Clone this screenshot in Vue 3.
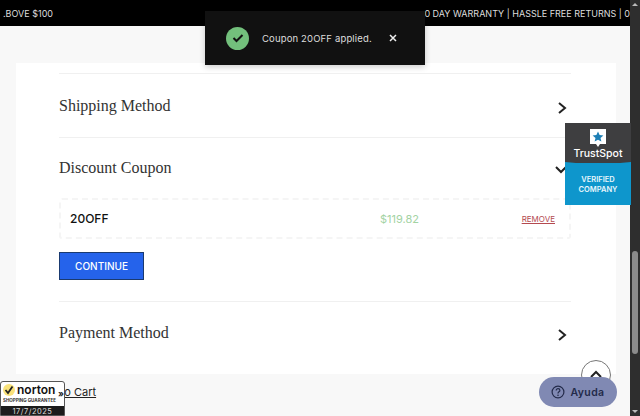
<script setup>
const sections = {
  shipping: 'Shipping Method',
  discount: 'Discount Coupon',
  payment: 'Payment Method'
};
</script>

<template>
  <div class="page">
    <div class="main">
      <div class="promo">
        <span>.BOVE $100</span>
        <span>0 DAY WARRANTY | HASSLE FREE RETURNS | 0</span>
      </div>

      <div class="card">
        <div class="row row-first">
          <h3>{{ sections.shipping }}</h3>
          <svg class="chev" width="12" height="14" viewBox="0 0 12 14"><path d="M3 2l6 5-6 5" /></svg>
        </div>

        <div class="row row-open">
          <h3>{{ sections.discount }}</h3>
          <svg class="chev" width="14" height="10" viewBox="0 0 14 10"><path d="M2 2l5 5 5-5" /></svg>
        </div>
        <div class="coupon">
          <span class="code">20OFF</span>
          <span class="amount">$119.82</span>
          <a class="remove">REMOVE</a>
        </div>
        <button class="continue">CONTINUE</button>

        <div class="row row-last">
          <h3>{{ sections.payment }}</h3>
          <svg class="chev" width="12" height="14" viewBox="0 0 12 14"><path d="M3 2l6 5-6 5" /></svg>
        </div>
      </div>

      <div class="back"><a>Back to Cart</a></div>
    </div>

    <div class="scrollbar">
      <svg class="arrow" width="10" height="9" viewBox="0 0 10 9"><path d="M2 6h6L5 3z" /></svg>
      <div class="track"><div class="thumb"></div></div>
      <svg class="arrow" width="10" height="9" viewBox="0 0 10 9"><path d="M2 3h6L5 6z" /></svg>
    </div>

    <div class="toast">
      <span class="tick">
        <svg width="12" height="10" viewBox="0 0 12 10"><path d="M1.5 5l3 3 6-6" /></svg>
      </span>
      <span class="toast-text">Coupon 20OFF applied.</span>
      <svg class="close" width="8" height="8" viewBox="0 0 8 8"><path d="M1 1l6 6M7 1l-6 6" /></svg>
    </div>

    <div class="trust">
      <div class="trust-top">
        <svg width="16" height="19" viewBox="0 0 16 19">
          <path d="M0 0h16v15h-6l-2 3-2-3H0z" fill="#fff" />
          <path d="M8 2.500l1.600 3.500 3.800.4-2.900 2.500.9 3.700L8 10.700l-3.400 1.900.9-3.700-2.900-2.500 3.800-.4z" fill="#1d7fb5" />
        </svg>
        <span class="trust-name">TrustSpot</span>
      </div>
      <div class="trust-bottom">
        <svg class="wave" width="66" height="4" viewBox="0 0 66 4"><path d="M0 1Q33 5 66 1V4H0z" /></svg>
        VERIFIED<br />COMPANY
      </div>
    </div>

    <div class="top-btn">
      <svg width="14" height="9" viewBox="0 0 14 9"><path d="M2 7l5-5 5 5" /></svg>
    </div>

    <div class="help">
      <svg width="14" height="14" viewBox="0 0 14 14">
        <circle cx="7" cy="7" r="5.900" />
        <path d="M5.200 5.400c0-2.300 3.700-2.200 3.700 0 0 1.500-1.900 1.400-1.900 3" />
        <circle class="dot" cx="7" cy="10.200" r=".8" />
      </svg>
      <span>Ayuda</span>
    </div>

    <div class="norton">
      <div class="norton-top">
        <div class="norton-logo">
          <span class="norton-check">
            <svg width="10" height="10" viewBox="0 0 10 10"><path d="M1.500 5l2.500 3 4.500-6.500" /></svg>
          </span>
          <span class="norton-name">norton</span>
        </div>
        <div class="norton-sub">SHOPPING GUARANTEE</div>
      </div>
      <div class="norton-date">17/7/2025</div>
      <span class="norton-more">»</span>
    </div>
  </div>
</template>

<style>
html, body { margin: 0; overflow: hidden; }
</style>

<style scoped>
.page {
  position: relative;
  display: flex;
  width: 640px;
  height: 416px;
  overflow: hidden;
  background: #f8f8f8;
  font-family: "Inter", "Liberation Sans", sans-serif;
}

.main { flex: 1; min-width: 0; }

.promo {
  display: flex;
  justify-content: space-between;
  align-items: center;
  height: 26px;
  padding: 0 0 0 3px;
  background: #000;
  color: #ddd;
  font-size: 9px;
  white-space: nowrap;
}

.card {
  margin: 37px 14px 0 16px;
  height: 311px;
  box-sizing: border-box;
  padding: 10px 45px 0 43px;
  background: #fff;
}

.row {
  display: flex;
  justify-content: space-between;
  align-items: center;
  border-top: 1px solid #f0f0f0;
  padding-right: 3px;
}
.row-first { height: 63px; }
.row-open { height: 60px; }
.row-last { height: 66px; margin-top: 21px; }
.row-first .chev, .row-open .chev { margin-top: 4px; }
.row-last h3 { margin-bottom: 4px; }

.row h3 {
  font-family: "Liberation Serif", serif;
  font-size: 16px;
  font-weight: 400;
  color: #333;
  margin-top: 0;
}
.row-first h3, .row-open h3 { margin-bottom: 0; }

.chev path, .top-btn path {
  fill: none;
  stroke: #222;
  stroke-width: 2;
}

.coupon {
  display: grid;
  grid-template-columns: 1fr 100px 75px;
  align-items: center;
  height: 41px;
  box-sizing: border-box;
  padding: 0 14px 0 9px;
  border: 2px dashed #f5f5f5;
  border-radius: 3px;
}
.code { font-size: 12px; font-weight: 500; color: #111; }
.amount { font-size: 11px; color: #a3d3a3; }
.remove {
  justify-self: end;
  font-size: 8px;
  color: #b44a50;
  text-decoration: underline;
}

.continue {
  display: block;
  width: 85px;
  height: 28px;
  margin-top: 13px;
  padding: 0;
  background: #2563eb;
  border: 1px solid #1a3a70;
  color: #fff;
  font-family: inherit;
  font-size: 10px;
  font-weight: 500;
}

.back {
  margin-top: 11px;
  padding-left: 32px;
  font-size: 11px;
  color: #222;
}
.back a { text-decoration: underline; }

.scrollbar {
  display: flex;
  flex-direction: column;
  flex-shrink: 0;
  width: 10px;
  background: #2e2e2e;
}
.arrow { flex-shrink: 0; fill: #bbb; }
.track { flex: 1; padding-top: 242px; }
.thumb {
  width: 6px;
  height: 103px;
  margin: 0 auto;
  border-radius: 3px;
  background: #8b8b8b;
}

.toast {
  position: absolute;
  left: 205px;
  top: 11px;
  display: flex;
  align-items: center;
  width: 220px;
  height: 54px;
  box-sizing: border-box;
  padding-left: 21px;
  background: #111;
  box-shadow: 0 2px 6px rgba(0, 0, 0, .2);
}
.tick {
  display: flex;
  align-items: center;
  justify-content: center;
  width: 23px;
  height: 23px;
  border-radius: 50%;
  background: #73c07c;
}
.tick path {
  fill: none;
  stroke: #111;
  stroke-width: 2;
}
.toast-text {
  margin-left: 13px;
  color: #ddd;
  font-size: 9.500px;
  letter-spacing: .15px;
  white-space: nowrap;
}
.close {
  margin-left: 17px;
  flex-shrink: 0;
}
.close path { stroke: #eee; stroke-width: 1.500; }

.trust {
  position: absolute;
  left: 565px;
  top: 123px;
  width: 66px;
  height: 82px;
  overflow: hidden;
}
.trust-top {
  display: flex;
  flex-direction: column;
  align-items: center;
  height: 40px;
  padding-top: 6px;
  box-sizing: border-box;
  background: #3e3e40;
  color: #fff;
}
.trust-name { font-size: 10.500px; font-weight: 500; line-height: 12px; margin-top: 0; }
.trust-bottom {
  position: relative;
  height: 42px;
  padding-top: 12px;
  box-sizing: border-box;
  background: #0e96cc;
  color: #e8f6fc;
  font-size: 7.500px;
  font-weight: 600;
  line-height: 10px;
  text-align: center;
}
.wave {
  position: absolute;
  left: 0;
  top: -2px;
  fill: #0e96cc;
}

.top-btn {
  position: absolute;
  left: 581px;
  top: 360px;
  display: flex;
  justify-content: center;
  width: 30px;
  height: 30px;
  padding-top: 9px;
  box-sizing: border-box;
  border: 1px solid #777;
  border-radius: 50%;
  background: #fff;
}

.help {
  position: absolute;
  left: 539px;
  top: 377px;
  display: flex;
  align-items: center;
  justify-content: center;
  gap: 5px;
  width: 78px;
  height: 30px;
  border-radius: 15px;
  background: #8089b3;
  color: #232b4a;
  font-size: 10.500px;
  font-weight: 600;
  letter-spacing: .4px;
}
.help svg { fill: none; stroke: #232b4a; stroke-width: 1.200; }
.help .dot { fill: #232b4a; stroke: none; }

.norton {
  position: absolute;
  left: 0;
  top: 381px;
  width: 65px;
  height: 35px;
  box-sizing: border-box;
  border: 1px solid #555;
  border-radius: 3px 3px 0 0;
  overflow: hidden;
  background: #fff;
}
.norton-top { height: 24px; }
.norton-logo {
  display: flex;
  align-items: center;
  gap: 2px;
  height: 16px;
  padding-left: 2px;
}
.norton-check {
  display: flex;
  align-items: center;
  justify-content: center;
  width: 12px;
  height: 12px;
  border-radius: 50%;
  background: #f9e27a;
}
.norton-check path { fill: none; stroke: #222; stroke-width: 1.800; }
.norton-name { font-size: 12px; font-weight: 600; color: #111; line-height: 14px; }
.norton-sub {
  padding-left: 2px;
  font-size: 4.500px;
  font-weight: 700;
  color: #333;
  white-space: nowrap;
}
.norton-date {
  height: 11px;
  background: #1c1c1c;
  color: #ddd;
  font-size: 7.500px;
  line-height: 11px;
  text-align: center;
  letter-spacing: .5px;
}
.norton-more {
  position: absolute;
  right: 0;
  top: 7px;
  font-size: 9px;
  font-weight: 700;
  line-height: 10px;
  color: #222;
}
</style>
